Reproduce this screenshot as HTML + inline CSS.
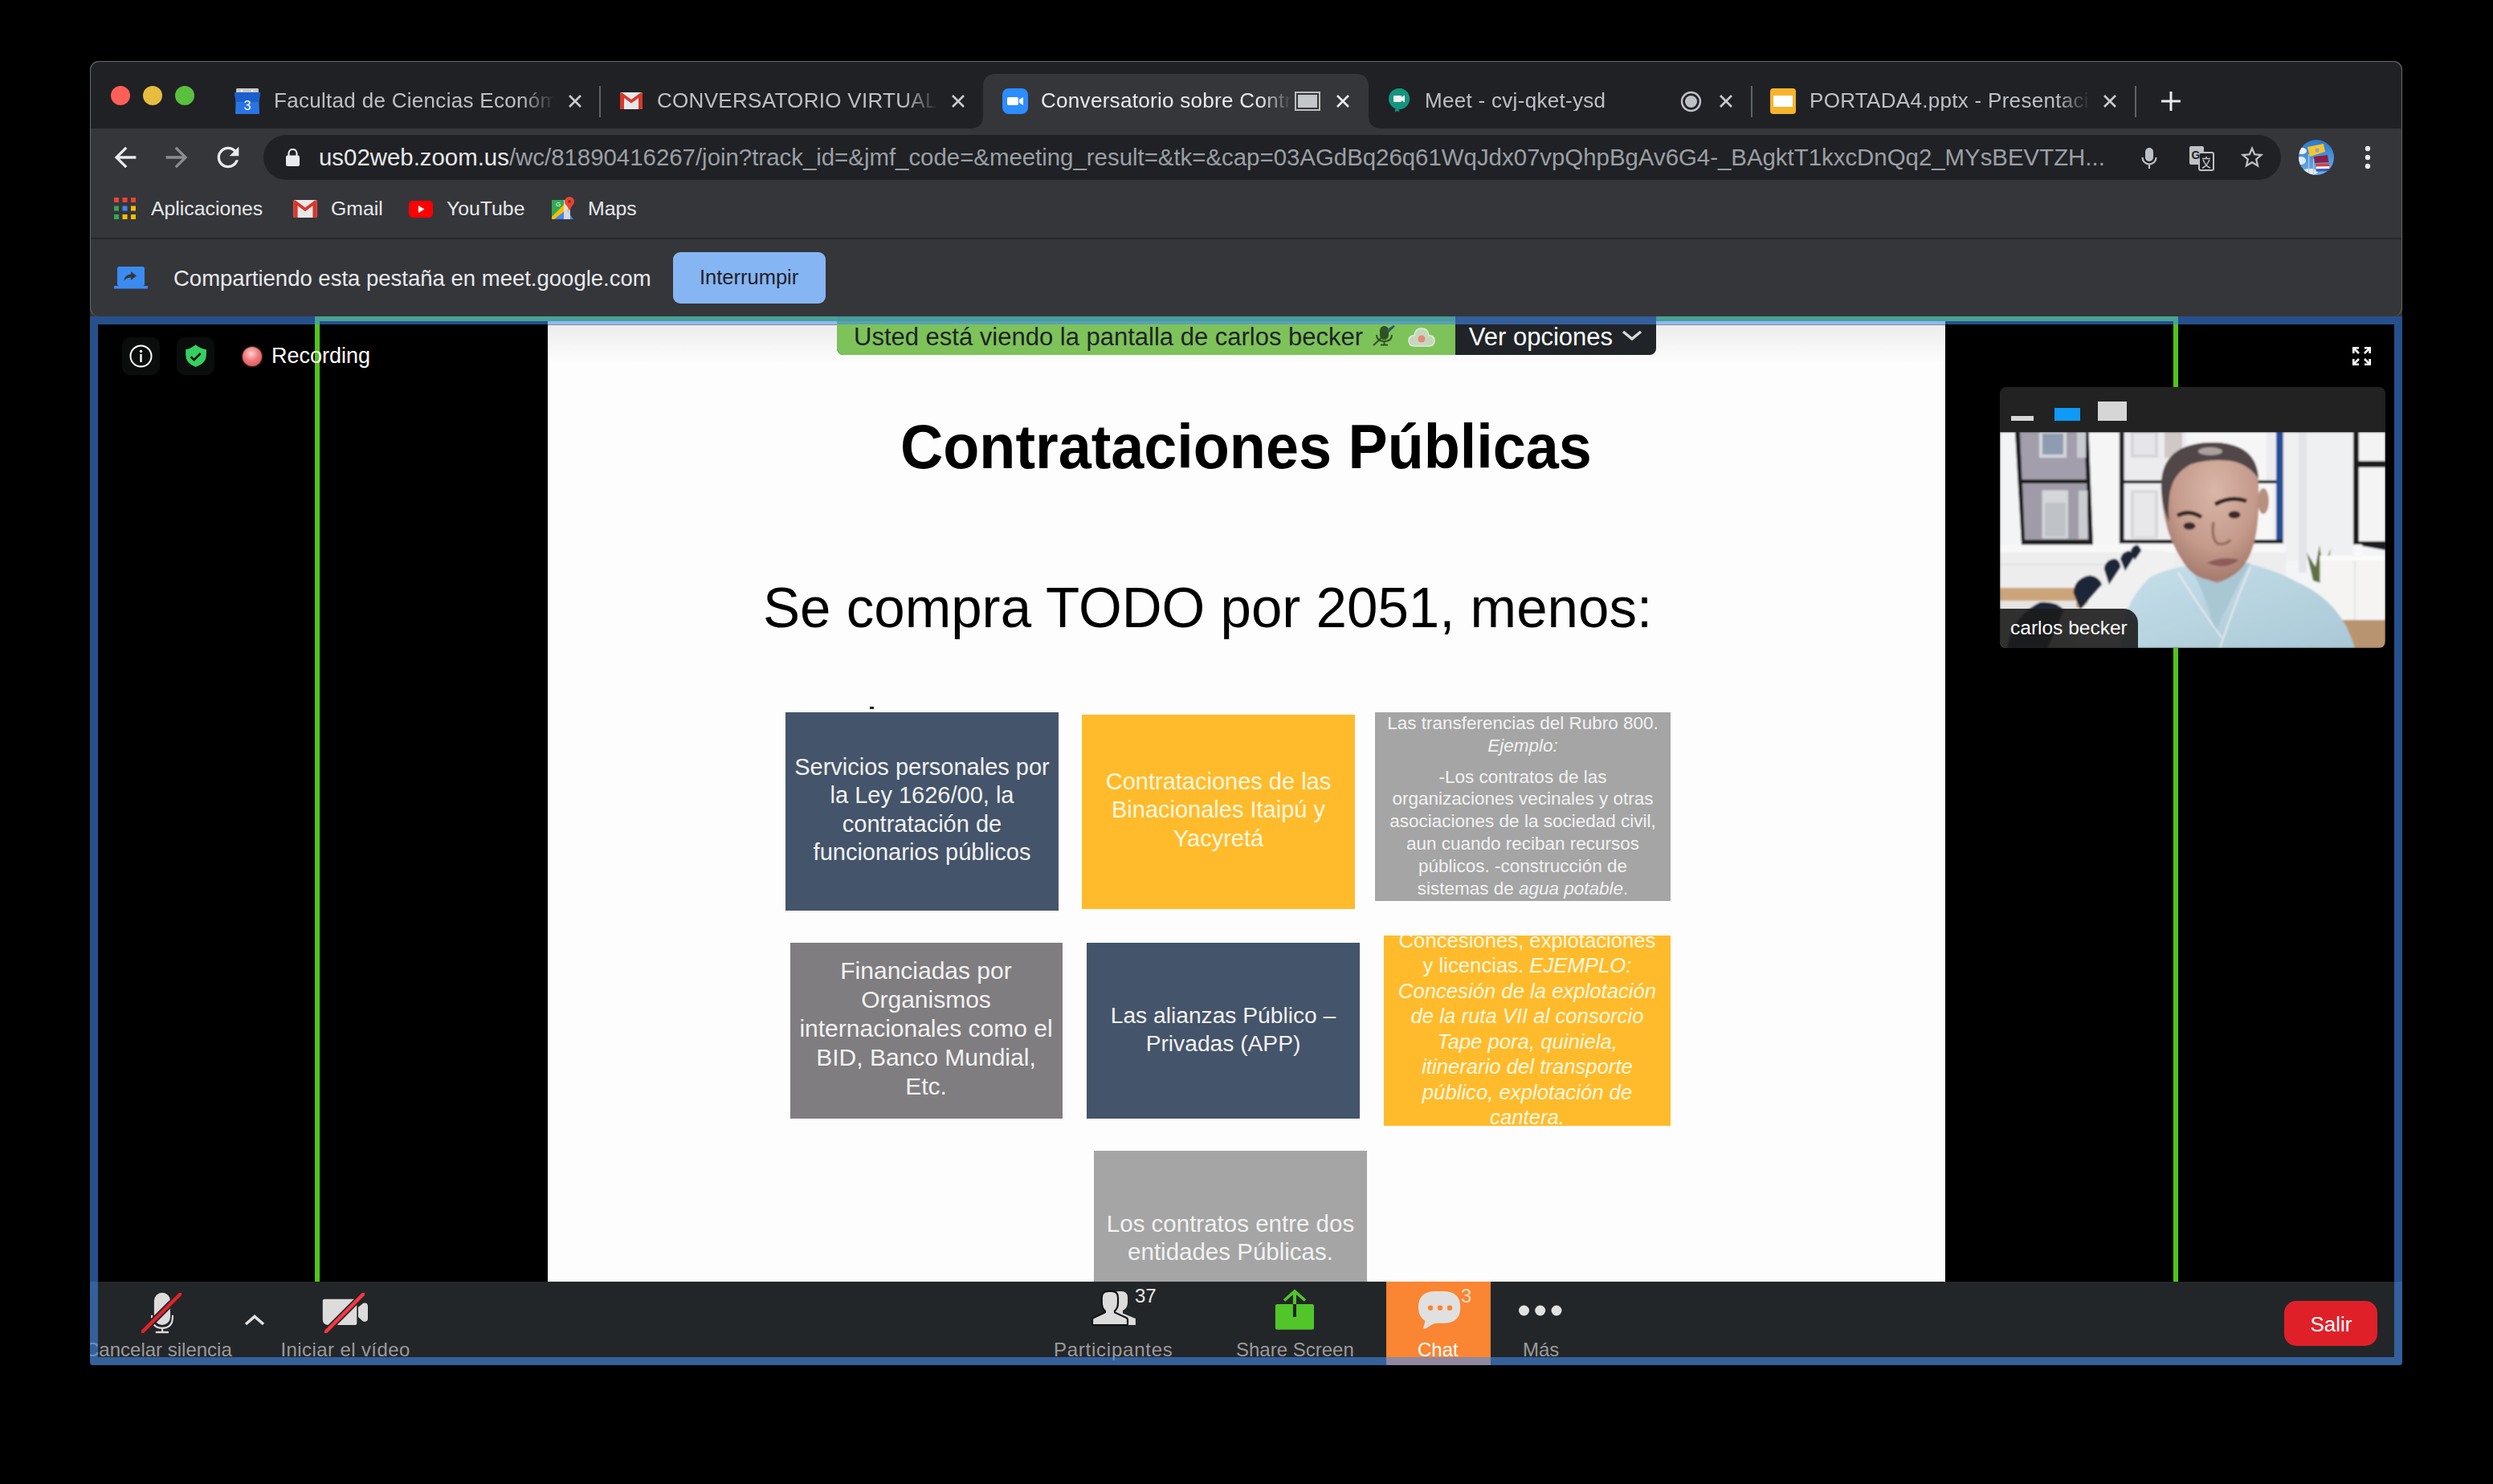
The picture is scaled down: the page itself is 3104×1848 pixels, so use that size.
<!DOCTYPE html>
<html><head><meta charset="utf-8">
<style>
*{margin:0;padding:0;box-sizing:border-box}
html,body{width:3104px;height:1848px;background:#000;overflow:hidden;font-family:"Liberation Sans",sans-serif}
.a{position:absolute}
#win{left:112px;top:76px;width:2879px;height:1624px;background:#35363a;border-radius:11px;overflow:hidden}
#frame{left:112px;top:76px;width:2879px;height:318px;border-radius:11px;border:1.5px solid #6a6a6a;border-bottom:none;pointer-events:none}
#tabs{left:0;top:0;width:2879px;height:84px;background:#202124}
.tt{color:#bdc1c6;font-size:26px;white-space:nowrap;top:36px;line-height:1;letter-spacing:0.3px;overflow:hidden;-webkit-mask-image:linear-gradient(to right,#000 88%,transparent 100%)}
.sep{width:2px;height:34px;background:#5f6368;top:36px}
.x{color:#d0d0d0;font-size:30px;top:26px}
#omni{left:216px;top:92px;width:2512px;height:56px;background:#202124;border-radius:28px}
.bm{color:#e8eaed;font-size:24.8px;top:172px;line-height:1;white-space:nowrap}
#info{left:0;top:220px;width:2879px;height:98px;background:#35363a;border-top:2px solid #27282b}
#zm{left:112px;top:394px;width:2879px;height:1306px;background:#000;overflow:hidden;border-radius:0 0 3px 3px}
#slide{left:570px;top:6px;width:1740px;height:1196px;background:#fdfdfd;overflow:hidden}
#ztb{left:0;top:1202px;width:2879px;height:104px;background:#232628}
#bord{left:0;top:0;width:2879px;height:1306px;border:10px solid rgba(66,138,241,0.58);border-radius:0 0 3px 3px}
.st{white-space:nowrap;line-height:1;color:#000;transform-origin:0 0}
.bx{overflow:hidden}
.zl{top:1274.5px;font-size:24px;line-height:1;color:#9b9b9b;white-space:nowrap}
.bt{position:absolute;left:-20px;right:-20px;text-align:center;color:#f2f2f2;white-space:nowrap}
.lbl{color:#9a9a9a;font-size:24px;white-space:nowrap;line-height:28px}
</style></head><body>
<div id="win" class="a">
  <div id="tabs" class="a">
    <div class="a" style="left:26px;top:31px;width:24px;height:24px;border-radius:50%;background:#ff5f57"></div>
    <div class="a" style="left:66px;top:31px;width:24px;height:24px;border-radius:50%;background:#e6bd3f"></div>
    <div class="a" style="left:106px;top:31px;width:24px;height:24px;border-radius:50%;background:#5ac03e"></div>
    <!-- active tab -->
    <svg class="a" style="left:1096px;top:15px" width="512" height="69" viewBox="0 0 512 69"><path d="M0 69 Q16 69 16 53 V17 Q16 1 32 1 H480 Q496 1 496 17 V53 Q496 69 512 69 Z" fill="#35363a"/></svg>
    <!-- tab1 -->
    <svg class="a" style="left:180px;top:34px" width="32" height="32" viewBox="0 0 32 32"><rect x="2" y="0" width="28" height="6" rx="1.5" fill="#c8c8c8"/><circle cx="9" cy="3" r="1.3" fill="#fff"/><circle cx="22" cy="3" r="1.3" fill="#fff"/><path d="M0 5 H32 L30.5 17 L31 31 Q31 32 30 32 H2 Q1 32 1 31 L1.5 17 Z" fill="#2a74e6"/><path d="M0 5 H32 L30.5 17 H1.5 Z" fill="#1b5fcc"/><text x="16" y="27" font-family="Liberation Sans" font-size="16" fill="#fff" text-anchor="middle">3</text></svg>
    <div class="a tt" style="left:229px;width:350px">Facultad de Ciencias Económicas</div>
    <svg class="a" style="left:595px;top:41px" width="18" height="18" viewBox="0 0 18 18"><path d="M2 2L16 16M16 2L2 16" stroke="#c9cccf" stroke-width="2.6"/></svg>
    <div class="a" style="left:634px;top:31px;width:2px;height:39px;background:#5f6368"></div>
    <!-- tab2 gmail -->
    <svg class="a" style="left:660px;top:39px" width="28" height="21" viewBox="0 0 28 21"><rect x="0" y="0" width="28" height="21" rx="2" fill="#e8e8e8"/><path d="M0 2 V19 Q0 21 2 21 H5 V7 L14 13.5 L23 7 V21 H26 Q28 21 28 19 V2 Q28 0 25.5 0.5 L14 9 L2.5 0.5 Q0 0 0 2Z" fill="#d9362b"/></svg>
    <div class="a tt" style="left:706px;width:350px">CONVERSATORIO VIRTUAL SOBRE</div>
    <svg class="a" style="left:1072px;top:41px" width="18" height="18" viewBox="0 0 18 18"><path d="M2 2L16 16M16 2L2 16" stroke="#c9cccf" stroke-width="2.6"/></svg>
    <!-- tab3 zoom active -->
    <svg class="a" style="left:1136px;top:34px" width="32" height="32" viewBox="0 0 32 32"><rect x="0" y="0" width="32" height="32" rx="8" fill="#2d8cff"/><rect x="6" y="11" width="14" height="10" rx="2" fill="#fff"/><path d="M21 14 L26 11 V21 L21 18Z" fill="#fff"/></svg>
    <div class="a tt" style="left:1184px;width:312px;color:#e8eaed">Conversatorio sobre Contrataciones</div>
    <svg class="a" style="left:1500px;top:38px" width="32" height="24" viewBox="0 0 32 24"><rect x="1" y="1" width="30" height="22" fill="none" stroke="#bdbdbd" stroke-width="2"/><rect x="4" y="4" width="24" height="16" fill="#c4c7ca"/></svg>
    <svg class="a" style="left:1551px;top:41px" width="18" height="18" viewBox="0 0 18 18"><path d="M2 2L16 16M16 2L2 16" stroke="#e8eaed" stroke-width="2.6"/></svg>
    <!-- tab4 meet -->
    <svg class="a" style="left:1617px;top:34px" width="26" height="30" viewBox="0 0 26 30"><path d="M13 0 A13 13 0 1 1 8 25 V30 L13 26 Z" fill="#16907f"/><circle cx="13" cy="13" r="13" fill="#14957f"/><path d="M9 26 L13 30 V25Z" fill="#14957f"/><rect x="6" y="9" width="10" height="8" rx="1" fill="#f1f1f1"/><path d="M16 11 L20 8.5 V17.5 L16 15Z" fill="#f1f1f1"/></svg>
    <div class="a tt" style="left:1662px;width:340px">Meet - cvj-qket-ysd</div>
    <svg class="a" style="left:1980px;top:37px" width="27" height="27" viewBox="0 0 27 27"><circle cx="13.5" cy="13.5" r="11.5" fill="none" stroke="#bdc1c6" stroke-width="2.4"/><circle cx="13.5" cy="13.5" r="7.5" fill="#bdc1c6"/></svg>
    <svg class="a" style="left:2028px;top:41px" width="18" height="18" viewBox="0 0 18 18"><path d="M2 2L16 16M16 2L2 16" stroke="#c9cccf" stroke-width="2.6"/></svg>
    <div class="a" style="left:2068px;top:31px;width:2px;height:39px;background:#5f6368"></div>
    <!-- tab5 slides -->
    <svg class="a" style="left:2092px;top:34px" width="32" height="32" viewBox="0 0 32 32"><rect x="0" y="0" width="32" height="32" rx="4" fill="#f6b42b"/><rect x="4" y="9" width="24" height="14" fill="#fff"/></svg>
    <div class="a tt" style="left:2141px;width:350px">PORTADA4.pptx - Presentaciones</div>
    <svg class="a" style="left:2506px;top:41px" width="18" height="18" viewBox="0 0 18 18"><path d="M2 2L16 16M16 2L2 16" stroke="#c9cccf" stroke-width="2.6"/></svg>
    <div class="a" style="left:2546px;top:31px;width:2px;height:39px;background:#5f6368"></div>
    <svg class="a" style="left:2579px;top:38px" width="24" height="24" viewBox="0 0 24 24"><path d="M12 0V24M0 12H24" stroke="#e8eaed" stroke-width="3"/></svg>
  </div>
  <!-- toolbar -->
  <svg class="a" style="left:24px;top:100px" width="40" height="40" viewBox="0 0 24 24"><path d="M20 11H7.83l5.59-5.59L12 4l-8 8 8 8 1.41-1.41L7.83 13H20v-2z" fill="#e8eaed"/></svg>
  <svg class="a" style="left:88px;top:100px" width="40" height="40" viewBox="0 0 24 24"><path d="M12 4l-1.41 1.41L16.17 11H4v2h12.17l-5.58 5.59L12 20l8-8z" fill="#8a8d91"/></svg>
  <svg class="a" style="left:152px;top:100px" width="40" height="40" viewBox="0 0 24 24"><path d="M17.65 6.35C16.2 4.9 14.21 4 12 4c-4.42 0-7.99 3.58-7.99 8s3.57 8 7.99 8c3.73 0 6.84-2.55 7.73-6h-2.08c-.82 2.33-3.04 4-5.65 4-3.31 0-6-2.69-6-6s2.69-6 6-6c1.66 0 3.14.69 4.22 1.78L13 11h7V4l-2.35 2.35z" fill="#e8eaed"/></svg>
  <div id="info" class="a"></div>
  <div id="omni" class="a"></div>
  <svg class="a" style="left:244px;top:109px" width="17" height="22" viewBox="0 0 17 22"><path d="M3.5 9 V6 A5 5 0 0 1 13.5 6 V9" fill="none" stroke="#e8eaed" stroke-width="2.2"/><rect x="0" y="8.5" width="17" height="13.5" rx="2" fill="#e8eaed"/></svg>
  <div class="a" style="left:285px;top:105px;font-size:29.4px;line-height:1;white-space:nowrap;color:#9aa0a6"><span style="color:#e8eaed">us02web.zoom.us</span>/wc/81890416267/join?track_id=&amp;jmf_code=&amp;meeting_result=&amp;tk=&amp;cap=03AGdBq26q61WqJdx07vpQhpBgAv6G4-_BAgktT1kxcDnQq2_MYsBEVTZH...</div>
  <svg class="a" style="left:2552px;top:106.5px" width="24" height="32" viewBox="0 0 24 32"><rect x="7" y="1" width="10" height="17" rx="5" fill="#bdc1c6"/><path d="M3.5 13 A8.5 8.5 0 0 0 20.5 13" fill="none" stroke="#bdc1c6" stroke-width="2.2"/><path d="M12 21.5V27" stroke="#bdc1c6" stroke-width="2.2"/></svg>
  <svg class="a" style="left:2614px;top:106px" width="32" height="32" viewBox="0 0 32 32"><rect x="0" y="0" width="18" height="23" rx="2" fill="#bdc1c6"/><rect x="12" y="8" width="18" height="22" rx="2" fill="#202124" stroke="#bdc1c6" stroke-width="2"/><text x="8" y="16" font-family="Liberation Sans" font-weight="bold" font-size="14" fill="#202124" text-anchor="middle">G</text><path d="M16 15.5 H26 M21 13 V15.5 M17 17 Q21 26 26 27 M25 17 Q21 26 16 27" fill="none" stroke="#bdc1c6" stroke-width="1.5"/></svg>
  <svg class="a" style="left:2675px;top:103px" width="34" height="34" viewBox="0 0 24 24"><path d="M22 9.24l-7.19-.62L12 2 9.19 8.63 2 9.24l5.46 4.73L5.82 21 12 17.27 18.18 21l-1.63-7.03L22 9.24zM12 15.4l-3.76 2.27 1-4.28-3.32-2.88 4.38-.38L12 6.1l1.71 4.04 4.38.38-3.32 2.88 1 4.28L12 15.4z" fill="#bdc1c6"/></svg>
  <svg class="a" style="left:2750px;top:98px" width="44" height="44" viewBox="0 0 44 44"><defs><clipPath id="av"><circle cx="22" cy="22" r="22"/></clipPath><linearGradient id="sky" x1="0" y1="0" x2="0" y2="1"><stop offset="0" stop-color="#2a78cc"/><stop offset="1" stop-color="#6cb0ea"/></linearGradient></defs><g clip-path="url(#av)"><rect width="44" height="44" fill="url(#sky)"/><ellipse cx="4" cy="14" rx="6" ry="4" fill="#eef4fb"/><ellipse cx="3" cy="26" rx="6" ry="5" fill="#dfeaf6"/><ellipse cx="14" cy="40" rx="10" ry="4" fill="#e6eef8"/><rect x="12" y="18" width="1.2" height="26" fill="#c8c8c8"/><rect x="18" y="24" width="1.2" height="20" fill="#c8c8c8"/><path d="M11 9 L31 5 L33 15 L14 21Z" fill="#f4c531"/><circle cx="23" cy="13" r="2.5" fill="#9aa0c0"/><path d="M19 21 L36 19 L37.6 28 L20 29Z" fill="#8b1f4a"/><path d="M21.7 30 L38 29.5 L38 33 L21.7 33.5Z" fill="#e03a3a"/><path d="M21.7 33.5 L38 33 L38 36 L21.7 36.5Z" fill="#f4f4f4"/><path d="M21.7 36.5 L38 36 L38 39 L21.7 39.5Z" fill="#3a56b8"/></g></svg>
  <svg class="a" style="left:2826px;top:100px" width="20" height="40" viewBox="0 0 20 40"><circle cx="10" cy="9" r="3.2" fill="#e8eaed"/><circle cx="10" cy="20" r="3.2" fill="#e8eaed"/><circle cx="10" cy="31" r="3.2" fill="#e8eaed"/></svg>
  <!-- bookmarks -->
  <svg class="a" style="left:30px;top:170px" width="27" height="27" viewBox="0 0 27 27"><rect x="0" y="0" width="6" height="6" fill="#ea4335"/><rect x="10.5" y="0" width="6" height="6" fill="#ea4335"/><rect x="21" y="0" width="6" height="6" fill="#ea4335"/><rect x="0" y="10.5" width="6" height="6" fill="#34a853"/><rect x="10.5" y="10.5" width="6" height="6" fill="#4285f4"/><rect x="21" y="10.5" width="6" height="6" fill="#fbbc05"/><rect x="0" y="21" width="6" height="6" fill="#34a853"/><rect x="10.5" y="21" width="6" height="6" fill="#fbbc05"/><rect x="21" y="21" width="6" height="6" fill="#fbbc05"/></svg>
  <div class="a bm" style="left:76px">Aplicaciones</div>
  <svg class="a" style="left:253px;top:173px" width="30" height="22" viewBox="0 0 28 21"><rect x="0" y="0" width="28" height="21" rx="2" fill="#e8e8e8"/><path d="M0 2 V19 Q0 21 2 21 H5 V7 L14 13.5 L23 7 V21 H26 Q28 21 28 19 V2 Q28 0 25.5 0.5 L14 9 L2.5 0.5 Q0 0 0 2Z" fill="#d9362b"/></svg>
  <div class="a bm" style="left:300px">Gmail</div>
  <svg class="a" style="left:397px;top:174px" width="30" height="21" viewBox="0 0 30 21"><rect x="0" y="0" width="30" height="21" rx="5" fill="#f00"/><path d="M12 6 L19.5 10.5 L12 15Z" fill="#fff"/></svg>
  <div class="a bm" style="left:444px">YouTube</div>
  <svg class="a" style="left:574px;top:168px" width="30" height="30" viewBox="0 0 30 30"><path d="M1 5 L16 5 L16 29 L1 29Z" fill="#34a853"/><path d="M1 29 L16 14 L28 29Z" fill="#4285f4"/><path d="M1 26 L17 10 L22 15 L4 29 H1Z" fill="#fbbc05"/><path d="M16 5 H24 V29 H16Z" fill="#e8e8e8" opacity="0.85"/><circle cx="23" cy="7" r="6" fill="#ea4335"/><path d="M18 9 L23 18 L28 9Z" fill="#ea4335"/><circle cx="23" cy="7" r="2" fill="#a52714"/><text x="6" y="13" font-family="Liberation Sans" font-size="8" fill="#fff">G</text></svg>
  <div class="a bm" style="left:620px">Maps</div>
  <svg class="a" style="left:30px;top:256px" width="42" height="28" viewBox="0 0 42 28"><rect x="4" y="0" width="34" height="24" rx="2.5" fill="#3b8cf0"/><rect x="0" y="24" width="42" height="3.5" fill="#3b8cf0"/><path d="M12 18 Q13 10 21 9.5 V6 L28 11.5 L21 17 V13.5 Q15.5 13.5 12 18Z" fill="#35363a"/></svg>
  <div class="a" style="left:104px;top:257px;font-size:27.5px;line-height:1;white-space:nowrap;color:#e8eaed">Compartiendo esta pestaña en meet.google.com</div>
  <div class="a" style="left:726px;top:238px;width:190px;height:64px;border-radius:9px;background:#86b5f3"></div>
  <div class="a" style="left:759px;top:256.5px;font-size:25.5px;line-height:1;white-space:nowrap;color:#202124">Interrumpir</div>
</div>
<div id="zm" class="a">
  <div id="slide" class="a">
    <div class="a" style="left:0;top:4px;width:1740px;height:48px;background:linear-gradient(#ececec,rgba(253,253,253,0))"></div>
    <div class="a" style="left:0;top:3.5px;width:1740px;height:1.5px;background:#8c8c8c"></div>
    <div class="a st" style="left:439px;top:118.3px;font-size:77px;font-weight:bold;transform:scaleX(0.958)">Contrataciones Públicas</div>
    <div class="a st" style="left:268px;top:320.9px;font-size:71px;transform:scaleX(0.973)">Se compra TODO por 2051, menos:</div>
    <div class="a" style="left:401px;top:480px;width:5px;height:3px;background:#222"></div>
    <div class="a bx" style="left:296px;top:487px;width:340px;height:247px;background:#44546a"><div class="bt" style="top:50.5px;font-size:29px;line-height:35.6px">Servicios personales por<br>la Ley 1626/00, la<br>contratación de<br>funcionarios públicos</div></div>
    <div class="a bx" style="left:665px;top:490px;width:340px;height:242px;background:#ffbb2c"><div class="bt" style="top:66.2px;font-size:29px;line-height:35.2px;color:#fff8e0">Contrataciones de las<br>Binacionales Itaipú y<br>Yacyretá</div></div>
    <div class="a bx" style="left:1030px;top:487px;width:368px;height:235px;background:#a5a5a5"><div class="bt" style="top:0px;font-size:22.5px;line-height:27.8px">Las transferencias del Rubro 800.<br><i>Ejemplo:</i><br><span style="display:block;height:11px"></span>-Los contratos de las<br>organizaciones vecinales y otras<br>asociaciones de la sociedad civil,<br>aun cuando reciban recursos<br>públicos. -construcción de<br>sistemas de <i>agua potable</i>.</div></div>
    <div class="a bx" style="left:301.5px;top:774px;width:339px;height:219px;background:#7f7d80"><div class="bt" style="top:17.4px;font-size:30px;line-height:36px">Financiadas por<br>Organismos<br>internacionales como el<br>BID, Banco Mundial,<br>Etc.</div></div>
    <div class="a bx" style="left:671px;top:774px;width:340px;height:219px;background:#44546a"><div class="bt" style="top:73.3px;font-size:28.2px;line-height:34.6px">Las alianzas Público –<br>Privadas (APP)</div></div>
    <div class="a bx" style="left:1041px;top:764.5px;width:357px;height:237.5px;background:#ffbb2c"><div class="bt" style="top:-9px;font-size:25.7px;line-height:31.5px;color:#fff8e0">Concesiones, explotaciones<br>y licencias. <i>EJEMPLO:</i><br><i>Concesión de la explotación<br>de la ruta VII al consorcio<br>Tape pora, quiniela,<br>itinerario del transporte<br>público, explotación de<br>cantera.</i></div></div>
    <div class="a bx" style="left:680px;top:1033px;width:340px;height:200px;background:#a5a5a5"><div class="bt" style="top:72.7px;font-size:29.5px;line-height:35px">Los contratos entre dos<br>entidades Públicas.</div></div>
  </div>
  <div class="a" style="left:280px;top:0;width:2320px;height:6px;background:#52c41a"></div>
  <div class="a" style="left:280px;top:0;width:6px;height:1202px;background:#52c41a"></div>
  <div class="a" style="left:2594px;top:0;width:6px;height:1202px;background:#52c41a"></div>
  <!-- top-left header -->
  <div class="a" style="left:40px;top:26px;width:47px;height:47px;border-radius:10px;background:#0b0c0c"></div>
  <svg class="a" style="left:49px;top:35px" width="29" height="29" viewBox="0 0 29 29"><circle cx="14.5" cy="14.5" r="13" fill="none" stroke="#fff" stroke-width="2"/><circle cx="14.5" cy="8.5" r="1.7" fill="#fff"/><rect x="13.3" y="12" width="2.4" height="10" fill="#fff"/></svg>
  <div class="a" style="left:108px;top:26px;width:47px;height:47px;border-radius:10px;background:#0b0c0c"></div>
  <svg class="a" style="left:118px;top:34px" width="28" height="30" viewBox="0 0 28 30"><path d="M13.5 1.2 Q19 6 26.9 7.3 V14 Q26.9 24.5 13.5 29 Q1.2 24.5 1.2 14 V7.3 Q8 6 13.5 1.2Z" fill="#33d15f"/><path d="M7.6 16.3 L11.6 20.2 L19.7 12" fill="none" stroke="#0b0c0c" stroke-width="2.6"/></svg>
  <div class="a" style="left:190px;top:38px;width:24px;height:24px;border-radius:50%;background:radial-gradient(circle at 45% 35%,#ffd0d0 0%,#f07878 45%,#d84848 100%);box-shadow:0 0 3px rgba(255,200,200,0.6)"></div>
  <div class="a" style="left:226px;top:35.7px;font-size:27px;line-height:1;color:#fff;white-space:nowrap">Recording</div>
  <!-- banner -->
  <div class="a" style="left:930px;top:0;width:1019.8px;height:47.7px;border-radius:0 0 8px 8px;background:#202428;overflow:hidden"><div class="a" style="left:0;top:0;width:770px;height:47.7px;background:#7dc35a"></div></div>
  <div class="a" style="left:930px;top:0;width:770px;height:6px;background:#4fb52a"></div>
  <div class="a" style="left:951px;top:9.8px;font-size:31px;line-height:1;color:#1e2326;white-space:nowrap">Usted está viendo la pantalla de carlos becker</div>
  <svg class="a" style="left:1597px;top:11px" width="28" height="26" viewBox="0 0 28 26"><rect x="9" y="1" width="11" height="17" rx="5.5" fill="#2f5222"/><path d="M5 12 Q5 20 14.5 20 Q24 20 24 12" fill="none" stroke="#2f5222" stroke-width="2"/><path d="M14.5 20V24M10 24.5H19" stroke="#2f5222" stroke-width="2"/><path d="M1 25 L27 1" stroke="#2f5222" stroke-width="2"/><path d="M17 7 L27 0.5" stroke="#2a5a9a" stroke-width="2"/></svg>
  <svg class="a" style="left:1641px;top:13px" width="34" height="26" viewBox="0 0 34 26"><path d="M8 24 Q1 24 1 17 Q1 11 8 10.5 Q9 2 17 2 Q25 2 26 10.5 Q33 11 33 17 Q33 24 26 24Z" fill="#c5d8bd" stroke="#e2ecdc" stroke-width="1.5"/><circle cx="17" cy="15" r="4.5" fill="#e58a7a"/></svg>
  <div class="a" style="left:1716.8px;top:9.8px;font-size:31px;line-height:1;color:#fff;white-space:nowrap">Ver opciones</div>
  <svg class="a" style="left:1907px;top:17px" width="26" height="14" viewBox="0 0 26 14"><path d="M2 2 L13 11 L24 2" fill="none" stroke="#d8d8d8" stroke-width="3.5"/></svg>
  <!-- expand icon -->
  <svg class="a" style="left:2817px;top:38px" width="23" height="23" viewBox="0 0 23 23"><g fill="none" stroke="#fff" stroke-width="2.6"><path d="M1.3 8V1.3H8M15 1.3H21.7V8M21.7 15V21.7H15M8 21.7H1.3V15"/><path d="M2 2L8 8M21 2L15 8M21 21L15 15M2 21L8 15"/></g></svg>
  <!-- video panel -->
  <div class="a" style="left:2378px;top:88px;width:480px;height:325px;border-radius:8px;background:#222;overflow:hidden">
    <div class="a" style="left:14px;top:35.5px;width:28px;height:6.3px;background:#d8d8d8"></div>
    <div class="a" style="left:68px;top:26px;width:32px;height:16px;background:#0e9bf8"></div>
    <div class="a" style="left:122px;top:17.5px;width:36px;height:24.5px;background:#d6d6d6"></div>
    <svg class="a" style="left:0;top:56px" width="480" height="269" viewBox="0 0 480 269">
      <defs><filter id="bl" x="-5%" y="-5%" width="110%" height="110%"><feGaussianBlur stdDeviation="0.9"/></filter>
      <radialGradient id="fc" cx="0.55" cy="0.35" r="0.7"><stop offset="0" stop-color="#d9b6a8"/><stop offset="0.6" stop-color="#c49a8b"/><stop offset="1" stop-color="#9e7466"/></radialGradient>
      <linearGradient id="sh" x1="0" y1="0" x2="1" y2="1"><stop offset="0" stop-color="#c6e0ea"/><stop offset="1" stop-color="#a9c8d6"/></linearGradient></defs>
      <g filter="url(#bl)">
      <rect width="480" height="269" fill="#f3f4f6"/>
      <!-- window 1 -->
      <path d="M19 0 H110.6 L116 140.5 H27Z" fill="#1c1c1f"/>
      <path d="M25 0 H105 L107.5 59 H27.5Z" fill="#a29eab"/>
      <path d="M28 64 H108 L110.5 134 H31Z" fill="#9f9ba8"/>
      <rect x="49" y="0" width="34" height="32" fill="#d2d6dc"/><rect x="53" y="2" width="26" height="26" fill="#8f9bb0"/>
      <rect x="96" y="0" width="11" height="32" fill="#c8ccd2"/>
      <rect x="52.5" y="72.5" width="32.5" height="60" fill="#d4d6da"/><rect x="56" y="88" width="26" height="42" fill="#bfc3c8"/>
      <rect x="98" y="73" width="11" height="60" fill="#c9ccd0"/>
      <!-- window 2 -->
      <rect x="148.6" y="0" width="204" height="138.6" fill="#1e1f22"/>
      <rect x="154.6" y="0" width="192" height="60" fill="#ecebee"/>
      <rect x="154.6" y="64" width="192" height="70" fill="#eeedf0"/>
      <rect x="163" y="0" width="34" height="32" fill="#d6d6da"/><rect x="167" y="2" width="26" height="26" fill="#e6e6ea"/>
      <rect x="163" y="72.5" width="34" height="60" fill="#d8d8dc"/><rect x="167" y="76" width="26" height="54" fill="#e8e8eb"/>
      <rect x="205" y="0" width="22" height="32" fill="#d0c8c8"/>
      <rect x="232" y="0" width="100" height="60" fill="#f6f6f7"/>
      <rect x="232" y="64" width="108" height="70" fill="#f7f7f8"/>
      <rect x="344" y="0" width="8" height="134" fill="#244e9a"/>
      <!-- pillars -->
      <rect x="116" y="0" width="32.6" height="150" fill="#f5f5f6"/>
      <rect x="353" y="0" width="87" height="160" fill="#eff0f2"/>
      <rect x="372" y="0" width="10" height="175" fill="#e2e4e8"/>
      <!-- window 3 -->
      <path d="M440 0 H480 V147 L440 140Z" fill="#1c1c1f"/>
      <rect x="447" y="0" width="33" height="36" fill="#f3f3f4"/>
      <rect x="447" y="44" width="33" height="92" fill="#f4f4f5"/>
      <!-- sill & wall -->
      <rect x="0" y="140.5" width="356" height="9.5" fill="#f8f8f8"/>
      <rect x="0" y="150" width="356" height="44" fill="#ededee"/>
      <rect x="0" y="164" width="150" height="1.5" fill="#dcdcde"/>
      <rect x="0" y="194" width="110" height="25" fill="#cba47a"/>
      <rect x="0" y="210" width="95" height="59" fill="#e6e4e2"/>
      <!-- table -->
      <path d="M92 230 L176 146 L220 150 L205 269 L110 269Z" fill="#f0f0f0"/>
      <!-- chairs -->
      <path d="M91.5 200 Q93 182 112 178.5 Q124 180 127 190 L100 221Z" fill="#1f2538"/>
      <path d="M129.6 170 Q131 159 143 157.7 Q150 160 150.4 168 L136 190Z" fill="#1f2538"/>
      <path d="M150 158 Q152 149 161 147.7 Q166 150 166.8 156 L156 173Z" fill="#1f2538"/>
      <path d="M163 148 Q165 141 171 140.5 Q175 143 176 148 L168 159.5Z" fill="#1f2538"/>
      <path d="M9 269 Q14 230 50 212 Q70 210 80 222 L60 269Z" fill="#1f2538"/>
      <!-- plant & cabinet -->
      <path d="M390 185 L382 150 L393 168 L398 141 L402 170 L412 145 L407 175 L415 160 L405 190Z" fill="#5e7040"/>
      <rect x="398.5" y="154" width="81.5" height="80" fill="#f5f4f2"/>
      <rect x="398.5" y="154" width="81.5" height="6" fill="#fbfbfa"/>
      <rect x="441" y="160" width="1.5" height="74" fill="#dedcd8"/>
      <rect x="462" y="234" width="3" height="16" fill="#e8e8e8"/>
      <rect x="425" y="234" width="55" height="35" fill="#b99470"/>
      <rect x="440" y="140" width="12" height="16" rx="3" fill="#f8f8f8"/>
      <!-- person -->
      <path d="M150 269 Q150 215 188 180 Q215 168 238 166 L305 163 Q345 172 368 186 Q425 210 442 269Z" fill="url(#sh)"/>
      <path d="M236 166 Q258 205 268 250 Q288 205 312 163Z" fill="#a9c6d3"/>
      <path d="M234 140 Q238 178 270 188 Q302 180 312 140Z" fill="#b38a7c"/>
      <path d="M201 72 Q199 13 266 13 Q322 14 322 66 Q324 118 314 146 Q302 181 271 185 Q243 185 229 163 Q211 136 206 110 Q202 94 201 72Z" fill="url(#fc)"/>
      <path d="M201 72 Q198 13 266 13 Q320 14 322 58 Q310 40 288 36 Q262 33 238 40 Q214 52 211 80 Q209 96 211 112 Q203 98 201 72Z" fill="#514749"/>
      <ellipse cx="262" cy="24" rx="15" ry="5" fill="#c2b6b4" opacity="0.8"/>
      <ellipse cx="328" cy="86" rx="7" ry="16" fill="#b98f80"/>
      <path d="M221 104 Q236 96 251 106" fill="none" stroke="#342624" stroke-width="5"/>
      <path d="M268 90 Q288 79 307 86" fill="none" stroke="#342624" stroke-width="5"/>
      <ellipse cx="236" cy="117" rx="7.5" ry="4.5" fill="#3a2c2a"/>
      <ellipse cx="292" cy="103" rx="7.5" ry="4.5" fill="#3a2c2a"/>
      <path d="M266 112 Q263 132 271 139 Q282 141 287 134" fill="none" stroke="#97705f" stroke-width="3.5"/>
      <path d="M258 163 Q276 154 298 159 Q281 173 258 163Z" fill="#8e5c5a"/>
      <path d="M222 175 Q250 220 276 256 M312 168 Q290 220 274 269" fill="none" stroke="#f2eeee" stroke-width="1.6"/>
      </g>
    </svg>
    <div class="a" style="left:0;top:276px;width:171.6px;height:49px;border-radius:0 18px 0 0;background:rgba(28,28,28,0.9)"></div>
    <div class="a" style="left:125px;top:276px;width:1px;height:1px"></div>
    <div class="a" style="left:125.5px;top:683px"></div>
  </div>
  <div class="a" style="left:2391px;top:376.4px;font-size:24.5px;line-height:1;color:#fff;white-space:nowrap">carlos becker</div>
  <!-- zoom toolbar -->
  <div id="ztb" class="a"></div>
  <svg class="a" style="left:60px;top:1212px" width="60" height="60" viewBox="0 0 60 60"><rect x="19.9" y="3.7" width="20.1" height="40.3" rx="10" fill="#dcdcdc"/><path d="M17.1 31.7 V34 Q17.1 47.8 30 47.8 Q42.9 47.8 42.9 34 V31.7" fill="none" stroke="#dcdcdc" stroke-width="2.2"/><rect x="29" y="47.5" width="2.2" height="5" fill="#dcdcdc"/><rect x="21.8" y="51.8" width="16.2" height="2.4" fill="#dcdcdc"/><defs><clipPath id="cm"><rect x="3.9" y="3.9" width="50.2" height="50.1"/></clipPath></defs><path d="M3.9 53.9 L54.1 3.9" stroke="#232628" stroke-width="8"/><path d="M1 56.8 L57 1" stroke="#e3212b" stroke-width="4.4" clip-path="url(#cm)"/></svg>
  <svg class="a" style="left:192px;top:1242px" width="26" height="16" viewBox="0 0 26 16"><path d="M2 13 L13 3.5 L24 13" fill="none" stroke="#e0e0e0" stroke-width="3.6"/></svg>
  <svg class="a" style="left:288px;top:1212px" width="62" height="60" viewBox="0 0 62 60"><path d="M3.8 11.7 H42.3 Q44.3 11.7 44.3 13.7 V42 Q44.3 44 42.3 44 H8.8 Q1.8 44 1.8 37 V13.7 Q1.8 11.7 3.8 11.7Z" fill="#dcdcdc"/><path d="M46 22 L52 17 Q53 16.6 54 16.6 Q58 16.6 58 21 V35.4 Q58 39.8 54 39.8 Q53 39.8 52 39.4 L46 34Z" fill="#dcdcdc"/><defs><clipPath id="cv"><rect x="4" y="4" width="50" height="50"/></clipPath></defs><path d="M4 54 L54 4" stroke="#232628" stroke-width="8"/><path d="M1 57 L57 1" stroke="#ff3640" stroke-width="4.4" clip-path="url(#cv)"/></svg>
  <div class="a zl" style="left:-6px">Cancelar silencia</div>
  <div class="a zl" style="left:237.5px;letter-spacing:0.4px">Iniciar el vídeo</div>
  <!-- participants -->
  <svg class="a" style="left:1246px;top:1212px" width="58" height="46" viewBox="0 0 58 46"><path d="M26 10 Q26 1.9 34 1.9 H38 Q46 1.9 46 10 V16 Q46 23 40 26 V29.5 L55.9 36 V44 H30 Z" fill="#dcdcdc"/><path d="M13.8 10 Q13.8 1.9 22 1.9 H26 Q34 1.9 34 10 V16 Q34 23 30 26.5 V28.4 L44.5 35 Q46 35.8 46 37.5 V42.5 Q46 44 44.5 44 H3.5 Q2 44 2 42.5 V37.5 Q2 35.8 3.5 35 L17.9 28.4 V26.5 Q13.8 23 13.8 16Z" fill="#dcdcdc" stroke="#121314" stroke-width="2.2"/></svg>
  <div class="a" style="left:1301px;top:1208px;font-size:24px;line-height:1;color:#e8e8e8;white-space:nowrap">37</div>
  <div class="a zl" style="left:1200px;letter-spacing:0.75px">Participantes</div>
  <!-- share -->
  <svg class="a" style="left:1474px;top:1210px" width="52" height="54" viewBox="0 0 52 54"><defs><clipPath id="ch"><rect x="11.9" y="0" width="28.2" height="20"/></clipPath></defs><rect x="1.9" y="20" width="48.1" height="31.8" rx="2.5" fill="#52c52b"/><rect x="23.9" y="20" width="4.1" height="16" fill="#232628"/><rect x="23.9" y="4" width="4.1" height="16" fill="#52c52b"/><path d="M13 15.5 L26 3.8 L39 15.5" fill="none" stroke="#52c52b" stroke-width="3.6" clip-path="url(#ch)"/></svg>
  <div class="a zl" style="left:1427px">Share Screen</div>
  <!-- chat -->
  <div class="a" style="left:1614px;top:1202px;width:129.5px;height:104px;background:#fa8532"></div>
  <svg class="a" style="left:1652px;top:1213px" width="58" height="50" viewBox="0 0 58 50"><path d="M23 1 H33 Q54.3 1 54.3 21 Q54.3 40.8 33 40.8 H26 Q21 40.8 18 43 L12 47 Q7.5 49 8.5 45 L10.5 38 Q2 33 2 21 Q2 1 23 1Z" fill="#e0e0e0"/><circle cx="17" cy="21.7" r="3.2" fill="#fa8532"/><circle cx="29" cy="21.7" r="3.2" fill="#fa8532"/><circle cx="41" cy="21.7" r="3.2" fill="#fa8532"/></svg>
  <div class="a" style="left:1707px;top:1208px;font-size:24px;line-height:1;color:#f8dcc6;white-space:nowrap">3</div>
  <div class="a zl" style="left:1653px;color:#fff">Chat</div>
  <!-- more -->
  <svg class="a" style="left:1777px;top:1230px" width="56" height="16" viewBox="0 0 56 16"><circle cx="8.5" cy="8" r="6.5" fill="#e2e2e2"/><circle cx="28.7" cy="8" r="6.5" fill="#e2e2e2"/><circle cx="49" cy="8" r="6.5" fill="#e2e2e2"/></svg>
  <div class="a zl" style="left:1784px">Más</div>
  <!-- salir -->
  <div class="a" style="left:2731.8px;top:1225.8px;width:116.2px;height:56.3px;border-radius:15px;background:#e02029"></div>
  <div class="a" style="left:2764.5px;top:1242px;font-size:26px;line-height:1;color:#fff;white-space:nowrap">Salir</div>
  <div id="bord" class="a"></div>
</div>
<div id="frame" class="a"></div>
</body></html>
